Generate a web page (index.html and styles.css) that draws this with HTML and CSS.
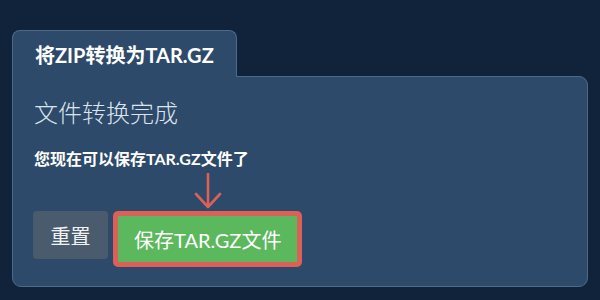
FILE: index.html
```html
<!DOCTYPE html>
<html lang="zh">
<head>
  <meta charset="UTF-8">
  <title>将ZIP转换为TAR.GZ</title>
  <link rel="stylesheet" href="styles.css">
</head>
<body>
  <div class="converter">
    <!-- Tab header -->
    <div class="tab">将ZIP转换为TAR.GZ</div>

    <!-- Result panel -->
    <div class="panel">
      <h2 class="done-title">文件转换完成</h2>
      <p class="done-text">您现在可以保存TAR.GZ文件了</p>
      <div class="actions">
        <button class="btn btn-reset">重置</button>
        <div class="save-wrap">
          <svg class="arrow" width="30" height="36" viewBox="0 0 30 36">
            <path d="M15 1 V34 M3 21 L15 34 L27 21" fill="none" stroke="#dc5f58" stroke-width="2.6" stroke-linecap="round" stroke-linejoin="round"/>
          </svg>
          <button class="btn btn-save">保存TAR.GZ文件</button>
        </div>
      </div>
    </div>
  </div>
</body>
</html>
```

FILE: styles.css
```css
body {
  margin: 0;
  height: 300px;
  background-color: #10233a;
  font-family: Lato, "Noto Sans CJK SC", sans-serif;
  color: #ffffff;
  overflow: hidden;
}
.converter {
  padding: 30px 12px 0 12px;
}
.tab {
  position: relative;
  z-index: 1;
  display: inline-block;
  height: 47px;
  line-height: 48px;
  padding: 0 22px;
  margin-bottom: -1px;
  background: #2d4a6a;
  border: 1px solid #4e6a8a;
  border-bottom: none;
  border-radius: 8px 8px 0 0;
  font-size: 20px;
  font-weight: bold;
  box-sizing: border-box;
}
.panel {
  background: #2d4a6a;
  border: 1px solid #4e6a8a;
  border-radius: 0 9px 9px 9px;
  padding: 20px 20px 20px 21px;
  height: 211px;
  box-sizing: border-box;
}
.done-title {
  margin: 0;
  font-size: 24px;
  font-weight: 300;
  line-height: 32px;
  color: #dde4ec;
}
.done-text {
  margin: 19px 0 0 0;
  font-size: 16px;
  font-weight: bold;
  line-height: 22px;
}
.actions {
  display: flex;
  align-items: flex-start;
  gap: 5px;
  margin-top: 41px;
  margin-left: -1px;
}
.btn {
  font-family: inherit;
  font-size: 20px;
  color: #ffffff;
  border: none;
  border-radius: 4px;
  cursor: pointer;
  box-sizing: border-box;
}
.btn-reset {
  height: 48px;
  width: 75px;
  background: #4b5b6e;
  color: #f0f2f4;
}
.save-wrap {
  position: relative;
}
.arrow {
  position: absolute;
  left: 50%;
  top: -38px;
  margin-left: -15px;
}
.btn-save {
  height: 56px;
  padding: 0 16px;
  background: #5cb85c;
  border: 5px solid #dc5f58;
  border-radius: 5px;
}
```
